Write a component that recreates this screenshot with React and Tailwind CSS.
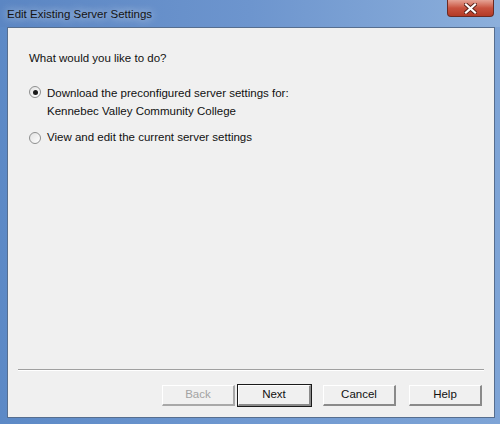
export default function App() {
  const font = { fontFamily: '"Liberation Sans", Arial, sans-serif' };

  const Radio = ({ checked }) => (
    <span className="relative flex h-[12px] w-[12px] shrink-0 items-center justify-center rounded-full border border-[#8e8f8f] bg-gradient-to-br from-[#e2e2e2] to-[#ffffff]">
      {checked && <span className="h-[5px] w-[5px] rounded-full bg-[#1a1a1a]" />}
    </span>
  );

  const Button = ({ label, disabled, isDefault }) => (
    <div
      className={`flex h-[23px] w-[75px] items-center justify-center text-[11.5px] ${
        isDefault ? "border border-[#1a1a1a]" : "border border-transparent"
      }`}
    >
      <div
        className={`flex h-full w-full items-center justify-center border-t border-l border-b-2 border-r-2 bg-[#f0f0f0] ${
          disabled
            ? "border-t-white border-l-white border-b-[#a8a8a8] border-r-[#a8a8a8] text-[#a3a3a3]"
            : "border-t-white border-l-white border-b-[#8a8a8a] border-r-[#8a8a8a] text-[#111]"
        }`}
      >
        {label}
      </div>
    </div>
  );

  return (
    <div
      className="flex h-[424px] w-[500px] flex-col bg-gradient-to-r from-[#5c89c6] via-[#6f98d0] to-[#7ea4d6]"
      style={font}
    >
      {/* title bar */}
      <div className="flex h-[27px] items-start justify-between bg-gradient-to-r from-[#5b86c3] via-[#6d95ce] to-[#8cafdb]">
        <div className="pl-[7px] pt-[6px] text-[11.5px] text-[#141414] [text-shadow:0_0_8px_rgba(255,255,255,0.9)]">
          Edit Existing Server Settings
        </div>
        <div className="mr-[6px] flex h-[17px] w-[47px] items-center justify-center rounded-b-[4px] border border-t-0 border-[#6b2a22] bg-gradient-to-b from-[#e5a396] via-[#c8523f] to-[#b33a26]">
          <svg width="13" height="11" viewBox="0 0 13 11">
            <path d="M2 1.5 L11 9.5 M11 1.5 L2 9.5" stroke="#5a2018" strokeWidth="4" strokeLinecap="square" />
            <path d="M2 1.5 L11 9.5 M11 1.5 L2 9.5" stroke="#ffffff" strokeWidth="2.2" strokeLinecap="square" />
          </svg>
        </div>
      </div>

      {/* client area */}
      <div className="mb-[6px] ml-[7px] mr-[5px] flex flex-1 flex-col border border-[#566e8f] bg-[#f0f0f0]">
        <div className="flex-1 pl-[21px] pt-[22px] text-[11.5px] text-[#111]">
          <div>What would you like to do?</div>

          <div className="mt-[17px] flex items-start gap-[6px]">
            <div className="pt-[2px]">
              <Radio checked />
            </div>
            <div className="leading-[18px]">
              <div>Download the preconfigured server settings for:</div>
              <div>Kennebec Valley Community College</div>
            </div>
          </div>

          <div className="mt-[9px] flex items-center gap-[6px]">
            <Radio />
            <div>View and edit the current server settings</div>
          </div>
        </div>

        <div className="mx-[10px] h-[2px] border-t border-[#a0a0a0] border-b border-b-white" />

        <div className="flex justify-end pb-[10px] pr-[11px] pt-[13px]">
          <div className="mr-[10px] flex gap-[1px]">
            <Button label="Back" disabled />
            <Button label="Next" isDefault />
          </div>
          <div className="mr-[11px]">
            <Button label="Cancel" />
          </div>
          <Button label="Help" />
        </div>
      </div>
    </div>
  );
}
